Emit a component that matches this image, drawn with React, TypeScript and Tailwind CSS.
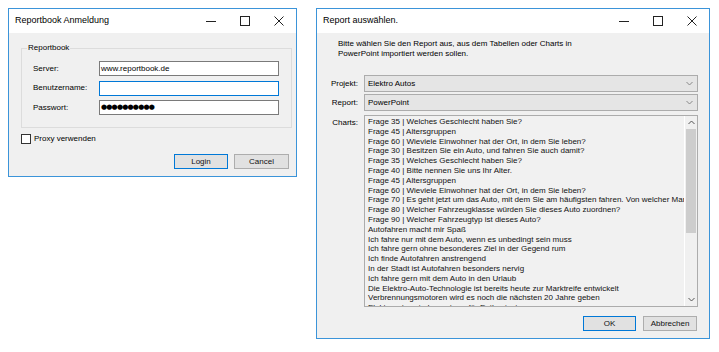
import React from 'react';

const charts = [
  'Frage 35 | Welches Geschlecht haben Sie?',
  'Frage 45 | Altersgruppen',
  'Frage 60 | Wieviele Einwohner hat der Ort, in dem Sie leben?',
  'Frage 30 | Besitzen Sie ein Auto, und fahren Sie auch damit?',
  'Frage 35 | Welches Geschlecht haben Sie?',
  'Frage 40 | Bitte nennen Sie uns Ihr Alter.',
  'Frage 45 | Altersgruppen',
  'Frage 60 | Wieviele Einwohner hat der Ort, in dem Sie leben?',
  'Frage 70 | Es geht jetzt um das Auto, mit dem Sie am häufigsten fahren. Von welcher Marke ist dieses Auto?',
  'Frage 80 | Welcher Fahrzeugklasse würden Sie dieses Auto zuordnen?',
  'Frage 90 | Welcher Fahrzeugtyp ist dieses Auto?',
  'Autofahren macht mir Spaß',
  'Ich fahre nur mit dem Auto, wenn es unbedingt sein muss',
  'Ich fahre gern ohne besonderes Ziel in der Gegend rum',
  'Ich finde Autofahren anstrengend',
  'In der Stadt ist Autofahren besonders nervig',
  'Ich fahre gern mit dem Auto in den Urlaub',
  'Die Elektro-Auto-Technologie ist bereits heute zur Marktreife entwickelt',
  'Verbrennungsmotoren wird es noch die nächsten 20 Jahre geben',
  'Elektroautos sind nur etwas für Enthusiasten',
];

// Titelleiste mit den drei Fenster-Knöpfen
const TitleBar = ({ title }: { title: string }) => (
  <div className="flex h-[24px] items-center bg-white pl-[6px]">
    <span className="flex-1 text-[9px] text-black">{title}</span>
    <div className="flex h-full">
      <div className="flex w-[34px] items-center justify-center">
        <svg width="10" height="10" viewBox="0 0 10 10">
          <path d="M0 5.5h10" stroke="#222" strokeWidth="1" />
        </svg>
      </div>
      <div className="flex w-[34px] items-center justify-center">
        <svg width="10" height="10" viewBox="0 0 10 10">
          <rect x="0.5" y="0.5" width="9" height="9" fill="none" stroke="#222" strokeWidth="1" />
        </svg>
      </div>
      <div className="flex w-[34px] items-center justify-center">
        <svg width="10" height="10" viewBox="0 0 10 10">
          <path d="M0.5 0.5l9 9M9.5 0.5l-9 9" stroke="#222" strokeWidth="1" />
        </svg>
      </div>
    </div>
  </div>
);

const Button = ({ label, primary, w }: { label: string; primary?: boolean; w: string }) => (
  <button
    className={`flex h-[15px] items-center justify-center border bg-[#e1e1e1] text-[8px] text-[#111] ${w} ${
      primary ? 'border-[#0078d7]' : 'border-[#adadad]'
    }`}
  >
    {label}
  </button>
);

const Chevron = ({ up, color }: { up?: boolean; color: string }) => (
  <svg width="7" height="5" viewBox="0 0 7 5">
    <path d={up ? 'M0.5 4l3-3 3 3' : 'M0.5 1l3 3 3-3'} fill="none" stroke={color} strokeWidth="1" />
  </svg>
);

const Combo = ({ value }: { value: string }) => (
  <div className="flex h-[17px] items-center border border-[#acacac] bg-[#e5e5e5] pl-[3px] pr-[4px]">
    <span className="flex-1 text-[8px]">{value}</span>
    <Chevron color="#888" />
  </div>
);

const LoginWindow = () => (
  <div className="flex h-[169px] w-[289px] flex-col border border-[#3b94d9] bg-[#f0f0f0]">
    <TitleBar title="Reportbook Anmeldung" />
    <div className="flex flex-1 flex-col pl-[12px] pr-[4px] pt-[10px]">
      <fieldset className="border border-[#dcdcdc] pb-[12px] pl-[11px] pr-[11px]">
        <legend className="ml-[-6px] px-[1px] text-[8px] leading-[10px]">Reportbook</legend>
        <div className="mt-[8px] grid grid-cols-[66px_180px] items-center gap-y-[4.5px] text-[8px]">
          <span>Server:</span>
          <div className="flex h-[15px] items-center border border-[#7a7a7a] bg-white pl-[1px]">www.reportbook.de</div>
          <span>Benutzername:</span>
          <div className="h-[15px] border border-[#0078d7] bg-white" />
          <span>Passwort:</span>
          <div className="flex h-[15px] items-center border border-[#7a7a7a] bg-white pl-[1px] text-[7px] font-['DejaVu_Sans',sans-serif] tracking-[-0.8px]">
            ●●●●●●●●●●
          </div>
        </div>
      </fieldset>
      <div className="mt-[5px] flex items-center gap-[3px] text-[8px]">
        <div className="h-[10px] w-[10px] border border-[#333] bg-white" />
        <span>Proxy verwenden</span>
      </div>
      <div className="mr-[3px] mt-[9px] flex justify-end gap-[6px]">
        <Button label="Login" primary w="w-[54px]" />
        <Button label="Cancel" w="w-[55px]" />
      </div>
    </div>
  </div>
);

const ReportWindow = () => (
  <div className="flex h-[331px] w-[394px] flex-col border border-[#3b94d9] bg-[#f0f0f0]">
    <TitleBar title="Report auswählen." />
    <div className="flex flex-1 flex-col pl-[6px] pr-[11px] pt-[6px] text-[8px]">
      <p className="pl-[15px] leading-[10px]">
        Bitte wählen Sie den Report aus, aus dem Tabellen oder Charts in
        <br />
        PowerPoint importiert werden sollen.
      </p>
      <div className="mt-[16px] grid grid-cols-[35px_334px] gap-x-[6px] gap-y-[2px]">
        <span className="self-center text-right">Projekt:</span>
        <Combo value="Elektro Autos" />
        <span className="self-center text-right">Report:</span>
        <Combo value="PowerPoint" />
        <span className="mt-[2px] pt-[2px] text-right">Charts:</span>
        <div className="mt-[2px] flex h-[192px] border border-[#acacac] bg-[#f1f1f1]">
          <div className="flex-1 overflow-hidden pl-[3px] pt-[1px]">
            {charts.map((c, i) => (
              <div key={i} className="whitespace-nowrap leading-[9.8px] text-[#111]">
                {c}
              </div>
            ))}
          </div>
          <div className="flex w-[13px] flex-col border-l border-white bg-[#f0f0f0]">
            <div className="flex h-[13px] items-center justify-center">
              <Chevron up color="#555" />
            </div>
            <div className="mx-[1px] h-[104px] bg-[#cdcdcd]" />
            <div className="flex-1" />
            <div className="flex h-[13px] items-center justify-center">
              <Chevron color="#555" />
            </div>
          </div>
        </div>
      </div>
      <div className="mt-[9px] flex justify-end gap-[7px] pr-[1px]">
        <Button label="OK" primary w="w-[53px]" />
        <Button label="Abbrechen" w="w-[54px]" />
      </div>
    </div>
  </div>
);

export default function App() {
  return (
    <div className="flex h-[352px] w-[719px] items-start gap-[19px] bg-white pl-[8px] pt-[8px] font-['Liberation_Sans',Arial,sans-serif] text-black">
      <LoginWindow />
      <ReportWindow />
    </div>
  );
}
